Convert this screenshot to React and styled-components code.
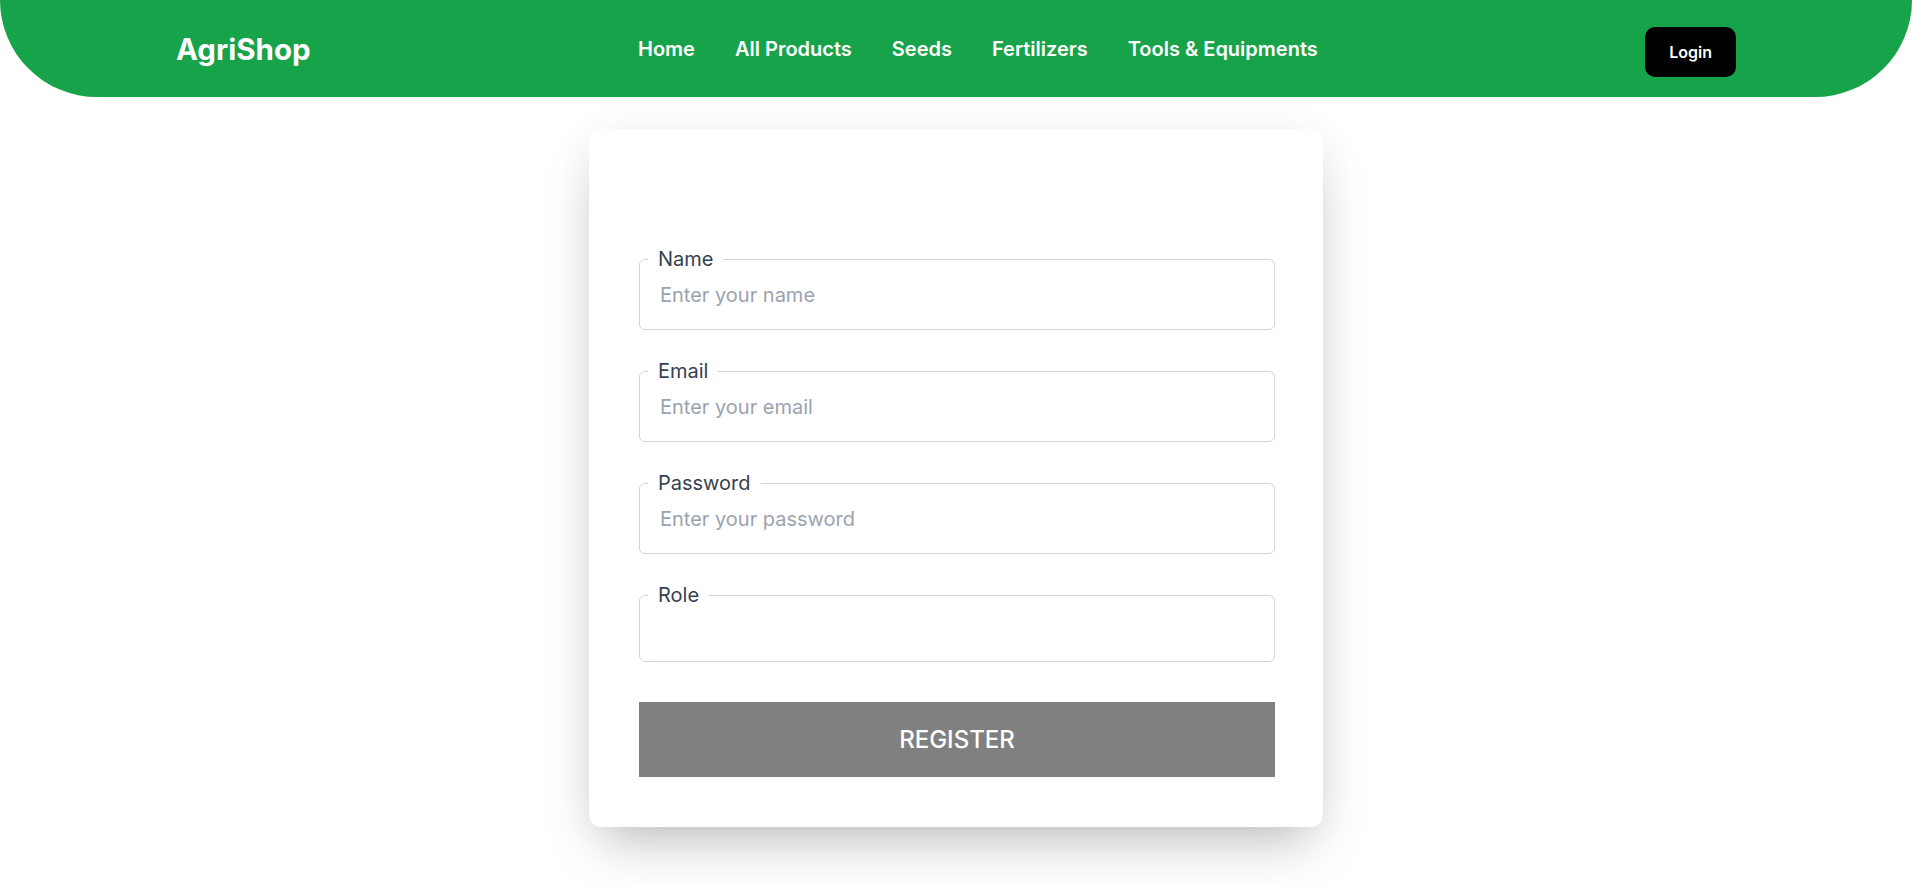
import React from "react";
import styled, { createGlobalStyle } from "styled-components";

const GlobalStyle = createGlobalStyle`
  *, *::before, *::after { box-sizing: border-box; }
  html, body { margin: 0; padding: 0; background: #ffffff; }
  body { font-family: Inter, "Noto Sans", "Liberation Sans", sans-serif; color: #111827; }
`;

const Header = styled.header`
  height: 97px;
  background: #17a34a;
  border-radius: 0 0 97px 97px;
  display: flex;
  align-items: center;
  justify-content: space-between;
  padding: 0 176px;
`;

const Logo = styled.div`
  font-size: 29.5px;
  font-weight: 700;
  color: #ffffff;
`;

const Nav = styled.nav`
  display: flex;
  align-items: center;
  gap: 40px;
`;

const NavLink = styled.a`
  font-size: 20px;
  font-weight: 600;
  color: #ffffff;
  text-decoration: none;
  cursor: pointer;
`;

const LoginButton = styled.button`
  margin-top: 7px;
  background: #000000;
  color: #ffffff;
  border: none;
  border-radius: 10px;
  padding: 13px 24px;
  font-family: inherit;
  font-size: 16px;
  line-height: 24px;
  font-weight: 600;
  cursor: pointer;
`;

const Main = styled.main`
  display: flex;
  justify-content: center;
  padding: 32px 0 60px;
`;

const Card = styled.form`
  width: 734px;
  background: #ffffff;
  border-radius: 12px;
  padding: 0 48px 50px 50px;
  box-shadow: 0 25px 50px -12px rgba(0, 0, 0, 0.25), 0 0 40px rgba(0, 0, 0, 0.035);
  display: flex;
  flex-direction: column;
`;

const CardHead = styled.div`
  height: 118px;
`;

const Field = styled.fieldset`
  margin: 0 0 ${(p) => (p.$last ? "40px" : "29px")};
  padding: 0 8px 10px;
  border: 1px solid #d1d5db;
  border-radius: 6px;
  min-width: 0;
`;

const Legend = styled.legend`
  padding: 0 10px;
  font-size: 20px;
  line-height: 24px;
  font-weight: 400;
  color: #374151;
`;

const Input = styled.input`
  display: block;
  width: 100%;
  height: 48px;
  padding: 0 12px;
  border: none;
  outline: none;
  background: transparent;
  font-family: inherit;
  font-size: 20px;
  color: #111827;
  &::placeholder { color: #9ca3af; }
`;

const Select = styled.select`
  display: block;
  width: 100%;
  height: 44px;
  padding: 0 12px;
  border: none;
  outline: none;
  background: transparent;
  appearance: none;
  font-family: inherit;
  font-size: 20px;
  color: #111827;
`;

const SubmitButton = styled.button`
  height: 75px;
  border: none;
  background: #808080;
  color: #ffffff;
  font-family: inherit;
  font-size: 24px;
  font-weight: 500;
  cursor: pointer;
`;

const links = ["Home", "All Products", "Seeds", "Fertilizers", "Tools & Equipments"];

const fields = [
  { label: "Name", type: "text", placeholder: "Enter your name" },
  { label: "Email", type: "email", placeholder: "Enter your email" },
  { label: "Password", type: "password", placeholder: "Enter your password" },
];

export default function App() {
  return (
    <>
      <GlobalStyle />
      <Header>
        <Logo>AgriShop</Logo>
        <Nav>
          {links.map((l) => (
            <NavLink key={l}>{l}</NavLink>
          ))}
        </Nav>
        <LoginButton type="button">Login</LoginButton>
      </Header>
      <Main>
        <Card onSubmit={(e) => e.preventDefault()}>
          <CardHead />
          {fields.map((f) => (
            <Field key={f.label}>
              <Legend>{f.label}</Legend>
              <Input type={f.type} placeholder={f.placeholder} />
            </Field>
          ))}
          <Field $last>
            <Legend>Role</Legend>
            <Select defaultValue="">
              <option value="" hidden></option>
              <option value="buyer">Buyer</option>
              <option value="seller">Seller</option>
            </Select>
          </Field>
          <SubmitButton type="submit">REGISTER</SubmitButton>
        </Card>
      </Main>
    </>
  );
}
